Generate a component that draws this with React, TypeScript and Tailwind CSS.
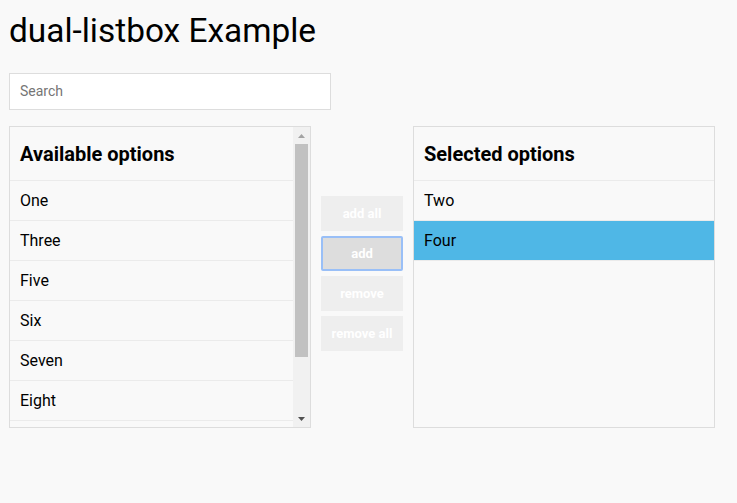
import React from "react";

const left = ["One", "Three", "Five", "Six", "Seven", "Eight"];
const right = ["Two", "Four"];

function Scrollbar() {
  return (
    <div className="flex w-[17px] shrink-0 flex-col bg-[#f1f1f1]">
      <div className="flex h-[17px] items-center justify-center">
        <svg width="7" height="4" viewBox="0 0 7 4">
          <polygon points="3.5,0 7,4 0,4" fill="#a3a3a3" />
        </svg>
      </div>
      <div className="px-[2px]">
        <div className="h-[213px] bg-[#c1c1c1]" />
      </div>
      <div className="flex-1" />
      <div className="flex h-[17px] items-center justify-center">
        <svg width="7" height="4" viewBox="0 0 7 4">
          <polygon points="0,0 7,0 3.5,4" fill="#505050" />
        </svg>
      </div>
    </div>
  );
}

function ListBox({
  title,
  items,
  selected,
  scroll,
}: {
  title: string;
  items: string[];
  selected?: string;
  scroll?: boolean;
}) {
  return (
    <div className="flex h-[302px] w-[302px] overflow-hidden border border-[#dddddd] bg-[#f9f9f9]">
      <div className="flex-1 overflow-hidden">
        <div className="flex h-[54px] items-center border-b border-[#ebebeb] px-[10px] text-[20px] font-bold text-black">
          {title}
        </div>
        {items.map((it) => (
          <div
            key={it}
            className={
              "flex h-[40px] items-center border-b border-[#ebebeb] px-[10px] pt-[1px] text-[16px] text-black " +
              (it === selected ? "bg-[#4fb7e6]" : "")
            }
          >
            {it}
          </div>
        ))}
      </div>
      {scroll && <Scrollbar />}
    </div>
  );
}

export default function App() {
  return (
    <div
      className="min-h-[503px] bg-[#f9f9f9] px-[9px] pt-[11px]"
      style={{ fontFamily: "Roboto, 'Noto Sans', sans-serif" }}
    >
      <h1 className="h-[38px] pt-[1px] text-[33.4px] leading-[38px] font-normal text-black">
        dual-listbox Example
      </h1>
      <div className="mt-[24px] flex h-[37px] w-[322px] items-center border border-[#dddddd] bg-white px-[10px] text-[14px] text-[#757575]">
        Search
      </div>
      <div className="mt-[16px] flex items-start gap-[10px]">
        <ListBox title="Available options" items={left} scroll />
        <div className="mt-[70px] flex w-[82px] flex-col gap-[5px]">
          <div className="flex h-[35px] items-center justify-center bg-[#eeeeee] pt-[1px] text-[13px] font-bold text-white">
            add all
          </div>
          <div className="flex h-[35px] items-center justify-center rounded-[2px] border-2 border-[#99bff7] bg-[#dddddd] pt-[1px] text-[13px] font-bold text-white">
            add
          </div>
          <div className="flex h-[35px] items-center justify-center bg-[#eeeeee] pt-[1px] text-[13px] font-bold text-white">
            remove
          </div>
          <div className="flex h-[35px] items-center justify-center bg-[#eeeeee] pt-[1px] text-[13px] font-bold text-white">
            remove all
          </div>
        </div>
        <ListBox title="Selected options" items={right} selected="Four" />
      </div>
    </div>
  );
}
